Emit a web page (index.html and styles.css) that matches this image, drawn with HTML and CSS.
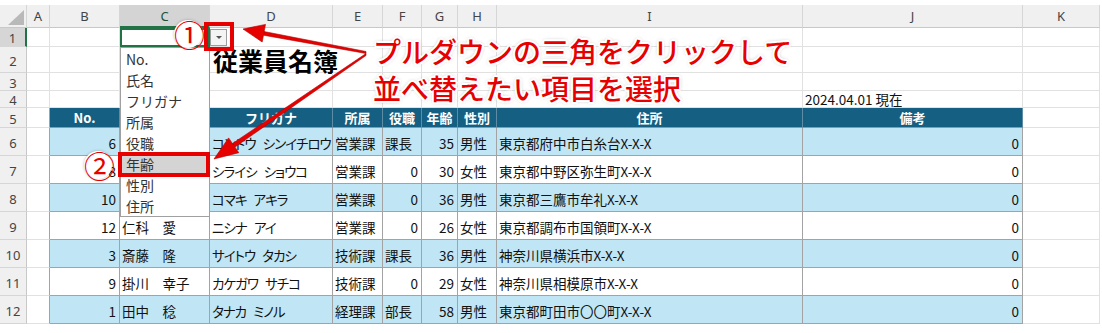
FILE: index.html
```html
<!DOCTYPE html>
<html lang="ja">
<head>
<meta charset="utf-8">
<title>従業員名簿</title>
<link rel="stylesheet" href="styles.css">
</head>
<body>
<div class="sheet">
  <div class="grid">
    <!-- column headers -->
    <div class="ch corner"><svg width="18" height="17" viewBox="0 0 18 17"><polygon points="17,1 17,16 1,16" fill="#b9b9b9"/></svg></div>
    <div class="ch">A</div><div class="ch">B</div><div class="ch sel">C</div><div class="ch">D</div><div class="ch">E</div><div class="ch">F</div><div class="ch">G</div><div class="ch">H</div><div class="ch">I</div><div class="ch">J</div><div class="ch">K</div>
    <!-- row 1 -->
    <div class="rh sel">1</div>
    <div></div><div></div><div class="cur"></div><div></div><div></div><div></div><div></div><div></div><div></div><div></div><div></div>
    <!-- row 2 -->
    <div class="rh">2</div>
    <div></div><div></div><div></div><div class="title">従業員名簿</div><div></div><div></div><div></div><div></div><div></div><div></div><div></div>
    <!-- row 3 -->
    <div class="rh">3</div>
    <div></div><div></div><div></div><div></div><div></div><div></div><div></div><div></div><div></div><div></div><div></div>
    <!-- row 4 -->
    <div class="rh">4</div>
    <div></div><div></div><div></div><div></div><div></div><div></div><div></div><div></div><div></div><div class="l">2024.04.01 現在</div><div></div>
    <!-- row 5 header -->
    <div class="rh">5</div>
    <div class="edge"></div>
    <div class="th">No.</div><div class="th"></div><div class="th">フリガナ</div><div class="th">所属</div><div class="th">役職</div><div class="th">年齢</div><div class="th">性別</div><div class="th">住所</div><div class="th">備考</div>
    <div></div>
    <!-- row 6 -->
    <div class="rh">6</div>
    <div class="edge"></div>
    <div class="td blue r">6</div><div class="td blue l"></div><div class="td blue l kana">コンドウ シンイチロウ</div><div class="td blue l">営業課</div><div class="td blue l">課長</div><div class="td blue r">35</div><div class="td blue l">男性</div><div class="td blue l">東京都府中市白糸台X-X-X</div><div class="td blue r">0</div>
    <div></div>
    <!-- row 7 -->
    <div class="rh">7</div>
    <div class="edge"></div>
    <div class="td r">8</div><div class="td l"></div><div class="td l kana">シライシ ショウコ</div><div class="td l">営業課</div><div class="td r">0</div><div class="td r">30</div><div class="td l">女性</div><div class="td l">東京都中野区弥生町X-X-X</div><div class="td r">0</div>
    <div></div>
    <!-- row 8 -->
    <div class="rh">8</div>
    <div class="edge"></div>
    <div class="td blue r">10</div><div class="td blue l"></div><div class="td blue l kana">コマキ アキラ</div><div class="td blue l">営業課</div><div class="td blue r">0</div><div class="td blue r">36</div><div class="td blue l">男性</div><div class="td blue l">東京都三鷹市牟礼X-X-X</div><div class="td blue r">0</div>
    <div></div>
    <!-- row 9 -->
    <div class="rh">9</div>
    <div class="edge"></div>
    <div class="td r">12</div><div class="td l">仁科　愛</div><div class="td l kana">ニシナ アイ</div><div class="td l">営業課</div><div class="td r">0</div><div class="td r">26</div><div class="td l">女性</div><div class="td l">東京都調布市国領町X-X-X</div><div class="td r">0</div>
    <div></div>
    <!-- row 10 -->
    <div class="rh">10</div>
    <div class="edge"></div>
    <div class="td blue r">3</div><div class="td blue l">斎藤　隆</div><div class="td blue l kana">サイトウ タカシ</div><div class="td blue l">技術課</div><div class="td blue l">課長</div><div class="td blue r">36</div><div class="td blue l">男性</div><div class="td blue l">神奈川県横浜市X-X-X</div><div class="td blue r">0</div>
    <div></div>
    <!-- row 11 -->
    <div class="rh">11</div>
    <div class="edge"></div>
    <div class="td r">9</div><div class="td l">掛川　幸子</div><div class="td l kana">カケガワ サチコ</div><div class="td l">技術課</div><div class="td r">0</div><div class="td r">29</div><div class="td l">女性</div><div class="td l">神奈川県相模原市X-X-X</div><div class="td r">0</div>
    <div></div>
    <!-- row 12 -->
    <div class="rh">12</div>
    <div class="edge"></div>
    <div class="td blue r">1</div><div class="td blue l">田中　稔</div><div class="td blue l kana">タナカ ミノル</div><div class="td blue l">経理課</div><div class="td blue l">部長</div><div class="td blue r">58</div><div class="td blue l">男性</div><div class="td blue l">東京都町田市〇〇町X-X-X</div><div class="td blue r">0</div>
    <div></div>
    <!-- partial row 13 -->
    <div class="rh end"></div>
    <div class="end"></div><div class="end"></div><div class="end"></div><div class="end"></div><div class="end"></div><div class="end"></div><div class="end"></div><div class="end"></div><div class="end"></div><div class="end"></div><div class="end"></div>
  </div>

  <!-- dropdown list (data validation) -->
  <div class="dd-btn"><span class="dd-tri"></span></div>
  <ul class="dd">
    <li>No.</li>
    <li>氏名</li>
    <li>フリガナ</li>
    <li>所属</li>
    <li>役職</li>
    <li class="hl">年齢</li>
    <li>性別</li>
    <li>住所</li>
  </ul>

  <!-- annotations -->
  <svg class="arrows" width="1102" height="333" viewBox="0 5 1102 333">
    <g fill="#e60000" stroke="#b00000" stroke-width="0.6" stroke-linejoin="round">
      <polygon points="366,56.5 264,36.5 263.4,40.2 366,58.5"/>
      <polygon points="243,34 265.5,29.4 262.2,47"/>
      <polygon points="366,58.5 232.5,148.5 235,152 366,60.5"/>
      <polygon points="214,164 228.6,142.9 238.8,157.7"/>
    </g>
  </svg>
  <div class="mark mark1"></div>
  <div class="mark mark2"></div>
  <span class="badge b1">①</span>
  <span class="badge b2">②</span>
  <div class="note">プルダウンの三角をクリックして<br>並べ替えたい項目を選択</div>
</div>
</body>
</html>
```
FILE: styles.css
```css
html, body {
  margin: 0;
  padding: 0;
  background: #ffffff;
}

body {
  padding-top: 5px;
  font-family: "Noto Sans CJK JP", "Noto Sans", sans-serif;
  color: #111;
}

.sheet {
  position: relative;
  width: 1102px;
}

.grid {
  display: grid;
  grid-template-columns: 27px 23px 70px 90px 123px 50px 39px 36px 39px 306px 220px 77px;
  grid-template-rows: 23px 19px 26px 18px 17px 20px repeat(7, 28px) 9px;
}

.grid > div {
  box-sizing: border-box;
  border-right: 1px solid #e1e1e1;
  border-bottom: 1px solid #e1e1e1;
  display: flex;
  align-items: center;
  white-space: nowrap;
  font-size: 13.5px;
  min-width: 0;
  overflow: visible;
}

/* column & row headers */
.grid > .ch {
  background: #f0f0f0;
  border-right-color: #d6d6d6;
  border-bottom-color: #c8c8c8;
  justify-content: center;
  font-family: "Noto Sans", sans-serif;
  font-size: 13px;
  color: #444;
}

.grid > .ch.sel {
  background: #d4d4d4;
  border-bottom: 2px solid #217346;
  color: #1d5236;
}

.grid > .corner {
  align-items: flex-end;
  justify-content: flex-end;
  padding: 0 1px 1px 0;
}

.grid > .rh {
  background: #f0f0f0;
  border-right-color: #c8c8c8;
  border-bottom-color: #d6d6d6;
  justify-content: center;
  font-family: "Noto Sans", sans-serif;
  font-size: 13px;
  color: #444;
  padding-top: 2px;
}

.grid > .rh.sel {
  background: #d6d6d6;
  border-right: 2px solid #217346;
}

.grid > .cur {
  outline: 2px solid #217346;
  outline-offset: -2px;
}

.grid > .end {
  background: #ffffff;
  border: none;
}

.grid > .title {
  font-size: 25px;
  font-weight: bold;
  padding-left: 3px;
  border-right: none;
  color: #000;
  padding-top: 1px;
}

/* table */
.grid > .edge {
  border-right-color: #a3a3a3;
}

.grid > .th {
  background: #156082;
  color: #ffffff;
  font-weight: bold;
  justify-content: center;
  font-size: 13px;
  border-right-color: #5f8ca5;
  border-bottom-color: #7a9fb4;
}

.grid > .td {
  border-right-color: #a3a3a3;
  border-bottom-color: #a3a3a3;
  padding-top: 2px;
}

.grid > .blue {
  background: #c0e6f5;
}

.grid > .r {
  justify-content: flex-end;
  padding-right: 3px;
}

.grid > .l {
  padding-left: 2px;
}

.grid > .kana {
  font-feature-settings: "palt";
  letter-spacing: -1px;
  word-spacing: 5px;
}

/* dropdown */
.dd-btn {
  position: absolute;
  left: 210px;
  top: 24px;
  width: 17px;
  height: 17px;
  box-sizing: border-box;
  border: 1px solid #9d9d9d;
  background: #f4f4f4;
  display: flex;
  align-items: center;
  justify-content: center;
}

.dd-tri {
  width: 0;
  height: 0;
  border-left: 3px solid transparent;
  border-right: 3px solid transparent;
  border-top: 3px solid #555;
}

.dd {
  position: absolute;
  left: 120px;
  top: 42px;
  width: 90px;
  height: 170px;
  box-sizing: border-box;
  margin: 0;
  padding: 1px 0 0;
  list-style: none;
  background: #ffffff;
  border: 1px solid #a0a0a0;
}

.dd li {
  height: 21px;
  line-height: 21px;
  padding-left: 5px;
  font-size: 14px;
  color: #333;
}

.dd li.hl {
  background: #d4d4d4;
}

/* annotations */
.arrows {
  position: absolute;
  left: 0;
  top: -5px;
  pointer-events: none;
}

.mark {
  position: absolute;
  box-sizing: border-box;
  border: 4px solid #e60000;
}

.mark1 {
  left: 204px;
  top: 17px;
  width: 30px;
  height: 29px;
}

.mark2 {
  left: 118px;
  top: 147px;
  width: 92px;
  height: 25px;
}

.badge {
  position: absolute;
  width: 28px;
  height: 28px;
  border-radius: 50%;
  background: #ffffff;
  box-shadow: 0 0 3px rgba(0, 0, 0, 0.25);
  color: #e60000;
  font-size: 31px;
  line-height: 28px;
  text-align: center;
}

.b1 {
  left: 174px;
  top: 15px;
}

.b2 {
  left: 84px;
  top: 146px;
}

.note {
  position: absolute;
  left: 373px;
  top: 28px;
  font-size: 28px;
  line-height: 37px;
  font-weight: 500;
  color: #e60000;
  white-space: nowrap;
  text-shadow:
    2px 0 #fff, -2px 0 #fff, 0 2px #fff, 0 -2px #fff,
    1.5px 1.5px #fff, -1.5px -1.5px #fff, 1.5px -1.5px #fff, -1.5px 1.5px #fff,
    0 0 4px rgba(0, 0, 0, 0.45);
}
```
